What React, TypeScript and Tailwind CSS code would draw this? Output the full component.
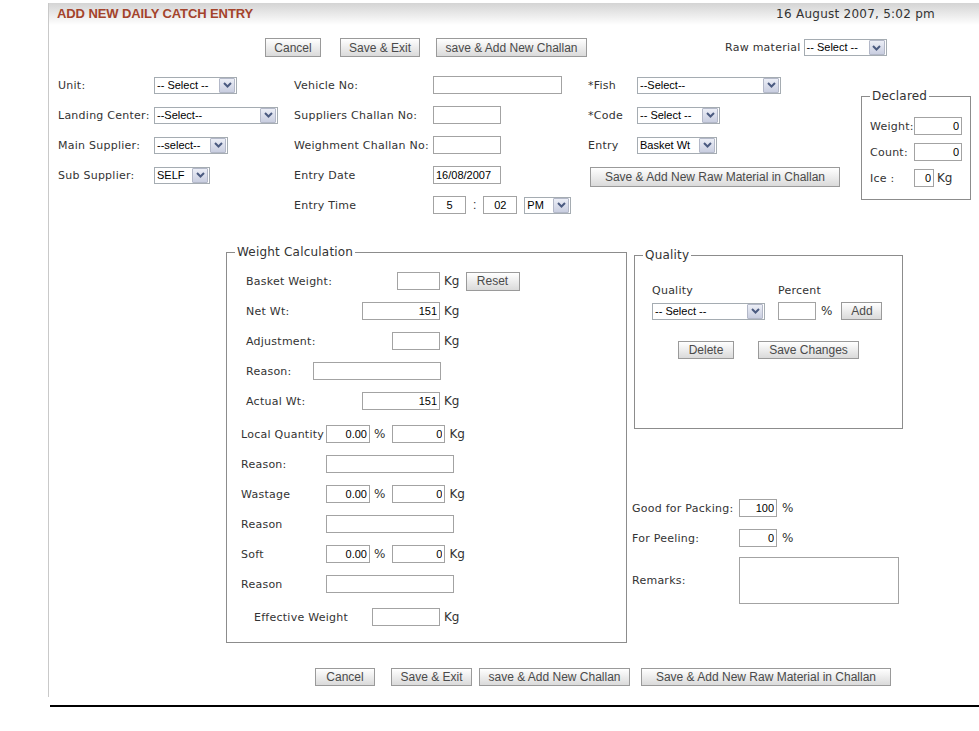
import React from 'react';

const verdana = "font-['DejaVu_Sans',Verdana,sans-serif]";
const arial = "font-['Liberation_Sans',Arial,sans-serif]";
const lbl = `${verdana} shrink-0 whitespace-nowrap text-[11px] leading-[13px] tracking-[0.25px] text-[#333]`;
const unit = `${verdana} shrink-0 whitespace-nowrap text-[12px] leading-[14px] text-[#333]`;
const legend = `${verdana} ml-[8px] px-[2px] text-[12px] leading-[12px] tracking-[0.2px] text-[#333]`;

function Btn({ className = '', children }: { className?: string; children: React.ReactNode }) {
  return (
    <button
      type="button"
      className={`${arial} shrink-0 border border-[#9a9a9a] bg-linear-to-b from-white to-[#dadada] text-[12px] leading-none whitespace-nowrap text-[#4a4a4a] ${className}`}
    >
      {children}
    </button>
  );
}

function Input({ className = '', value = '', align = 'text-right' }: { className?: string; value?: string; align?: string }) {
  return (
    <input
      readOnly
      value={value}
      className={`${arial} h-[18px] shrink-0 border border-[#a3a3a3] bg-white px-[2px] text-[11px] text-black outline-none ${align} ${className}`}
    />
  );
}

function Sel({ className = '', text }: { className?: string; text: string }) {
  return (
    <div className={`flex h-[17px] shrink-0 items-center border border-[#a5acb2] bg-white ${className}`}>
      <span className={`${arial} flex-1 overflow-hidden pl-[2px] text-[11px] leading-none whitespace-nowrap text-black`}>{text}</span>
      <span className="mr-[1px] flex h-[15px] w-[16px] items-center justify-center rounded-[1px] border border-[#b3b8c8] bg-linear-to-b from-[#eceef6] to-[#c9cee0]">
        <svg width="9" height="6" viewBox="0 0 9 6">
          <polyline points="1,1 4.5,4.5 8,1" fill="none" stroke="#4b5b80" strokeWidth="2" />
        </svg>
      </span>
    </div>
  );
}

export default function App() {
  return (
    <div className="min-h-[731px] bg-white pt-[3px]">
      <div className="ml-[48px] border-l border-[#c9c9c9] pb-[11px]">
        {/* header */}
        <div className="flex h-[22px] items-center justify-between bg-linear-to-b from-[#d4d4d4] to-white pl-[8px] pr-[44px]">
          <span className={`${arial} text-[13px] font-bold tracking-[-0.1px] text-[#a4432b]`}>ADD NEW DAILY CATCH ENTRY</span>
          <span className={`${verdana} text-[12px] tracking-[0.25px] text-[#333]`}>16 August 2007, 5:02 pm</span>
        </div>

        {/* top buttons */}
        <div className="flex h-[45px] items-center pl-[216px]">
          <Btn className="h-[19px] w-[56px]">Cancel</Btn>
          <Btn className="ml-[19px] h-[19px] w-[80px]">Save &amp; Exit</Btn>
          <Btn className="ml-[16px] h-[19px] w-[151px]">save &amp; Add New Challan</Btn>
          <span className={`${lbl} ml-[138px]`}>Raw material</span>
          <Sel className="ml-[3px] w-[83px]" text="-- Select --" />
        </div>

        {/* main fields */}
        <div className="flex pl-[9px]">
          <div className="grid w-[803px] grid-cols-[96px_140px_139px_155px_49px_224px] auto-rows-[30px] items-center">
            <span className={lbl}>Unit:</span>
            <Sel className="w-[83px]" text="-- Select --" />
            <span className={lbl}>Vehicle No:</span>
            <Input className="w-[129px]" />
            <span className={lbl}>*Fish</span>
            <Sel className="w-[144px]" text="--Select--" />

            <span className={lbl}>Landing Center:</span>
            <Sel className="w-[124px]" text="--Select--" />
            <span className={lbl}>Suppliers Challan No:</span>
            <Input className="w-[68px]" />
            <span className={lbl}>*Code</span>
            <Sel className="w-[83px]" text="-- Select --" />

            <span className={lbl}>Main Supplier:</span>
            <Sel className="w-[74px]" text="--select--" />
            <span className={lbl}>Weighment Challan No:</span>
            <Input className="w-[68px]" />
            <span className={lbl}>Entry</span>
            <Sel className="w-[80px]" text="Basket Wt" />

            <span className={lbl}>Sub Supplier:</span>
            <Sel className="w-[56px]" text="SELF" />
            <span className={lbl}>Entry Date</span>
            <Input className="w-[68px]" value="16/08/2007" align="text-left" />
            <div className="col-span-2">
              <Btn className="ml-[2px] h-[20px] w-[250px]">Save &amp; Add New Raw Material in Challan</Btn>
            </div>

            <span className={`${lbl} col-start-3`}>Entry Time</span>
            <div className="flex items-center">
              <Input className="w-[33px]" value="5" align="text-center" />
              <span className={`${arial} mx-[7px] text-[12px] text-[#333]`}>:</span>
              <Input className="w-[34px]" value="02" align="text-center" />
              <Sel className="ml-[7px] w-[47px]" text="PM" />
            </div>
          </div>

          <fieldset className="mt-[20px] h-[110px] w-[110px] self-start border border-[#8c8c8c]">
            <legend className={legend}>Declared</legend>
            <div className="pt-[11px] pl-[8px]">
              <div className="flex h-[26px] items-center">
                <span className={`${lbl} w-[44px]`}>Weight:</span>
                <Input className="h-[17px] w-[48px]" value="0" />
              </div>
              <div className="flex h-[26px] items-center">
                <span className={`${lbl} w-[44px]`}>Count:</span>
                <Input className="h-[17px] w-[48px]" value="0" />
              </div>
              <div className="flex h-[26px] items-center">
                <span className={`${lbl} w-[44px]`}>Ice :</span>
                <Input className="h-[17px] w-[20px]" value="0" />
                <span className={`${unit} ml-[3px]`}>Kg</span>
              </div>
            </div>
          </fieldset>
        </div>

        {/* weight + quality */}
        <div className="mt-[26px] flex items-start pl-[177px]">
          <fieldset className="w-[401px] shrink-0 border border-[#8c8c8c] pt-[8px] pb-[10px]">
            <legend className={legend}>Weight Calculation</legend>
            <div className="flex h-[30px] items-center pl-[19px]">
              <span className={`${lbl} w-[151px]`}>Basket Weight:</span>
              <Input className="w-[43px]" />
              <span className={`${unit} ml-[4px]`}>Kg</span>
              <Btn className="ml-[6px] h-[19px] w-[54px]">Reset</Btn>
            </div>
            <div className="flex h-[30px] items-center pl-[19px]">
              <span className={`${lbl} w-[116px]`}>Net Wt:</span>
              <Input className="w-[78px]" value="151" />
              <span className={`${unit} ml-[4px]`}>Kg</span>
            </div>
            <div className="flex h-[30px] items-center pl-[19px]">
              <span className={`${lbl} w-[146px]`}>Adjustment:</span>
              <Input className="w-[48px]" />
              <span className={`${unit} ml-[4px]`}>Kg</span>
            </div>
            <div className="flex h-[30px] items-center pl-[19px]">
              <span className={`${lbl} w-[67px]`}>Reason:</span>
              <Input className="w-[128px]" />
            </div>
            <div className="flex h-[30px] items-center pl-[19px]">
              <span className={`${lbl} w-[116px]`}>Actual Wt:</span>
              <Input className="w-[78px]" value="151" />
              <span className={`${unit} ml-[4px]`}>Kg</span>
            </div>

            <div className="mt-[3px] flex h-[30px] items-center pl-[14px]">
              <span className={`${lbl} w-[85px]`}>Local Quantity</span>
              <Input className="w-[44px]" value="0.00" />
              <span className={`${unit} ml-[4px]`}>%</span>
              <Input className="ml-[7px] w-[53px]" value="0" />
              <span className={`${unit} ml-[4px]`}>Kg</span>
            </div>
            <div className="flex h-[30px] items-center pl-[14px]">
              <span className={`${lbl} w-[85px]`}>Reason:</span>
              <Input className="w-[128px]" />
            </div>
            <div className="flex h-[30px] items-center pl-[14px]">
              <span className={`${lbl} w-[85px]`}>Wastage</span>
              <Input className="w-[44px]" value="0.00" />
              <span className={`${unit} ml-[4px]`}>%</span>
              <Input className="ml-[7px] w-[53px]" value="0" />
              <span className={`${unit} ml-[4px]`}>Kg</span>
            </div>
            <div className="flex h-[30px] items-center pl-[14px]">
              <span className={`${lbl} w-[85px]`}>Reason</span>
              <Input className="w-[128px]" />
            </div>
            <div className="flex h-[30px] items-center pl-[14px]">
              <span className={`${lbl} w-[85px]`}>Soft</span>
              <Input className="w-[44px]" value="0.00" />
              <span className={`${unit} ml-[4px]`}>%</span>
              <Input className="ml-[7px] w-[53px]" value="0" />
              <span className={`${unit} ml-[4px]`}>Kg</span>
            </div>
            <div className="flex h-[30px] items-center pl-[14px]">
              <span className={`${lbl} w-[85px]`}>Reason</span>
              <Input className="w-[128px]" />
            </div>
            <div className="mt-[3px] flex h-[30px] items-center pl-[27px]">
              <span className={`${lbl} w-[118px]`}>Effective Weight</span>
              <Input className="w-[68px]" />
              <span className={`${unit} ml-[4px]`}>Kg</span>
            </div>
          </fieldset>

          <div className="ml-[5px] flex flex-col">
            <fieldset className="mt-[3px] ml-[2px] h-[180px] w-[269px] border border-[#8c8c8c]">
              <legend className={legend}>Quality</legend>
              <div className="pt-[22px] pl-[17px]">
                <div className="flex h-[14px] items-center">
                  <span className={`${lbl} w-[126px]`}>Quality</span>
                  <span className={lbl}>Percent</span>
                </div>
                <div className="mt-[5px] flex h-[18px] items-center">
                  <Sel className="w-[113px]" text="-- Select --" />
                  <Input className="ml-[13px] w-[38px]" />
                  <span className={`${unit} ml-[5px]`}>%</span>
                  <Btn className="ml-[9px] h-[18px] w-[41px]">Add</Btn>
                </div>
                <div className="mt-[21px] flex h-[18px] items-center pl-[26px]">
                  <Btn className="h-[18px] w-[56px]">Delete</Btn>
                  <Btn className="ml-[24px] h-[18px] w-[101px]">Save Changes</Btn>
                </div>
              </div>
            </fieldset>

            <div className="mt-[64px] flex h-[30px] items-center">
              <span className={`${lbl} w-[107px]`}>Good for Packing:</span>
              <Input className="w-[38px]" value="100" />
              <span className={`${unit} ml-[5px]`}>%</span>
            </div>
            <div className="flex h-[30px] items-center">
              <span className={`${lbl} w-[107px]`}>For Peeling:</span>
              <Input className="w-[38px]" value="0" />
              <span className={`${unit} ml-[5px]`}>%</span>
            </div>
            <div className="mt-[4px] flex items-center">
              <span className={`${lbl} w-[107px]`}>Remarks:</span>
              <textarea readOnly className="h-[47px] w-[160px] resize-none border border-[#a3a3a3] bg-white outline-none" />
            </div>
          </div>
        </div>

        {/* bottom buttons */}
        <div className="mt-[25px] flex h-[18px] items-center pl-[266px]">
          <Btn className="h-[18px] w-[60px]">Cancel</Btn>
          <Btn className="ml-[16px] h-[18px] w-[81px]">Save &amp; Exit</Btn>
          <Btn className="ml-[7px] h-[18px] w-[151px]">save &amp; Add New Challan</Btn>
          <Btn className="ml-[11px] h-[18px] w-[250px]">Save &amp; Add New Raw Material in Challan</Btn>
        </div>
      </div>
      <div className="mt-[8px] ml-[50px] h-[2px] bg-black" />
    </div>
  );
}
